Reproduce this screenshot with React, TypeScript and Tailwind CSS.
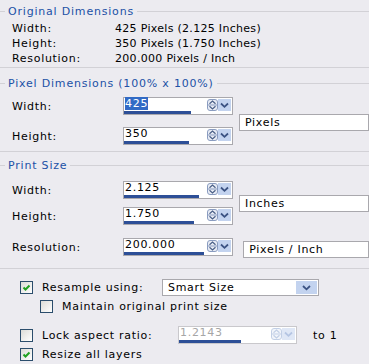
import React from "react";

const LINE = "bg-[#d2d1d6]";

function GroupHeader({ title, h = "h-[20px]" }: { title: string; h?: string }) {
  return (
    <div className={`flex items-center ${h}`}>
      <div className={`w-[5px] h-px ${LINE}`} />
      <span className="px-[3px] text-[#2151a6] whitespace-nowrap tracking-[0.8px]">{title}</span>
      <div className={`flex-1 h-px ${LINE}`} />
    </div>
  );
}

function SpinIcon({ faded }: { faded?: boolean }) {
  const s = faded ? "#c2cfe6" : "#8a9cc0";
  const f = faded ? "#c2cfe6" : "#4a5f86";
  return (
    <svg width="11" height="12" viewBox="0 0 11 12">
      <rect x="0.5" y="0.5" width="10" height="11" rx="2.5" fill={faded ? "#f2f5fb" : "#e8ecf5"} stroke={s} />
      <path d="M2.5 4.8 L5.5 2 L8.5 4.8" fill="none" stroke={f} strokeWidth="1.2" />
      <line x1="1" y1="6" x2="10" y2="6" stroke={s} />
      <path d="M2.5 7.2 L5.5 10 L8.5 7.2" fill="none" stroke={f} strokeWidth="1.2" />
    </svg>
  );
}

function ChevronBtn({ faded, w = 13, h = 12 }: { faded?: boolean; w?: number; h?: number }) {
  return (
    <svg width={w} height={h} viewBox={`0 0 ${w} ${h}`}>
      <rect x="0" y="0" width={w} height={h} fill={faded ? "#dfe7f6" : "#c3d3ef"} />
      <path
        d={`M${w / 2 - 3.5} ${h / 2 - 1.5} L${w / 2} ${h / 2 + 1.8} L${w / 2 + 3.5} ${h / 2 - 1.5}`}
        fill="none"
        stroke={faded ? "#b5c5e3" : "#3b5282"}
        strokeWidth="1.8"
      />
    </svg>
  );
}

function SpinBox({
  value,
  bar,
  selected,
  disabled,
  w = "w-[110px]",
  h = "h-[18px]",
}: {
  value: string;
  bar: number;
  selected?: boolean;
  disabled?: boolean;
  w?: string;
  h?: string;
}) {
  return (
    <div className={`flex flex-col ${w} ${h} bg-white border ${disabled ? "border-[#c9c8cc]" : "border-[#a9a8ad]"}`}>
      <div className="flex flex-1">
        <div className="flex-1 pl-[1px] leading-[12px]">
          <span className={selected ? "bg-[#316ac5] text-white" : disabled ? "text-[#a6a6a6]" : ""}>{value}</span>
        </div>
        <div className="flex items-start pt-[1px] pr-[1px]">
          <SpinIcon faded={disabled} />
          <ChevronBtn faded={disabled} />
        </div>
      </div>
      <div className="h-[3px] flex">
        <div className="h-full bg-[#2d4f97]" style={{ width: bar }} />
      </div>
    </div>
  );
}

function Combo({ label, extra }: { label: string; extra?: string }) {
  return (
    <div className={`w-[130px] h-[17px] bg-white border border-[#a9a8ad] pl-[5px] flex items-center whitespace-nowrap ${extra ?? ""}`}>
      {label}
    </div>
  );
}

function CheckBox({ checked }: { checked?: boolean }) {
  return (
    <div className="w-[13px] h-[13px] border border-[#2b4d6c] bg-gradient-to-br from-[#dcdcd7] to-[#ffffff] flex items-center justify-center shrink-0">
      {checked && (
        <svg width="11" height="11" viewBox="0 0 11 11">
          <path d="M2.5 5.5 L4.5 7.5 L8.5 3.5" fill="none" stroke="#21a121" strokeWidth="2" />
        </svg>
      )}
    </div>
  );
}

function InfoRow({ label, value }: { label: string; value: string }) {
  return (
    <div className="flex items-center h-[15px] pl-[12px]">
      <span className="w-[103px]">{label}</span>
      <span className="whitespace-nowrap tracking-[0.3px]">{value}</span>
    </div>
  );
}

function SpinRow({ label, children, extra }: { label: string; children: React.ReactNode; extra?: string }) {
  return (
    <div className={`flex items-center ${extra ?? ""}`}>
      <span className="pl-[12px] w-[123px]">{label}</span>
      {children}
    </div>
  );
}

export default function App() {
  return (
    <div
      className="w-[369px] h-[364px] bg-[#ecebf0] overflow-hidden text-[11px] leading-[13px] tracking-[0.7px] text-black"
      style={{ fontFamily: '"DejaVu Sans", Verdana, sans-serif' }}
    >
      <div className="pt-[2px]">
        <GroupHeader title="Original Dimensions" h="h-[19px]" />
        <InfoRow label="Width:" value="425 Pixels (2.125 Inches)" />
        <InfoRow label="Height:" value="350 Pixels (1.750 Inches)" />
        <InfoRow label="Resolution:" value="200.000 Pixels / Inch" />
        <div className={`mt-[1px] h-px ${LINE}`} />

        <div className="mt-[5px]">
          <GroupHeader title="Pixel Dimensions (100% x 100%)" />
        </div>
        <div className="flex mt-[4px]">
          <div className="flex flex-col w-[252px]">
            <SpinRow label="Width:">
              <SpinBox value="425" bar={67} selected />
            </SpinRow>
            <SpinRow label="Height:" extra="mt-[12px]">
              <SpinBox value="350" bar={65} />
            </SpinRow>
          </div>
          <div className="flex items-center">
            <Combo label="Pixels" extra="mt-[2px]" />
          </div>
        </div>
        <div className={`mt-[6px] h-px ${LINE}`} />

        <div className="mt-[3px]">
          <GroupHeader title="Print Size" />
        </div>
        <div className="flex mt-[6px]">
          <div className="flex flex-col w-[252px]">
            <SpinRow label="Width:">
              <SpinBox value="2.125" bar={75} />
            </SpinRow>
            <SpinRow label="Height:" extra="mt-[8px]">
              <SpinBox value="1.750" bar={70} />
            </SpinRow>
          </div>
          <div className="flex items-center">
            <Combo label="Inches" extra="mt-[1px]" />
          </div>
        </div>
        <div className="flex mt-[13px] items-start">
          <div className="w-[252px]">
            <SpinRow label="Resolution:">
              <SpinBox value="200.000" bar={80} />
            </SpinRow>
          </div>
          <Combo label="Pixels / Inch" extra="mt-[3px]" />
        </div>
        <div className={`mt-[10px] h-px ${LINE}`} />

        <div className="flex items-center h-[17px] mt-[10px] pl-[20px]">
          <CheckBox checked />
          <span className="pl-[9px] w-[129px] whitespace-nowrap">Resample using:</span>
          <div className="w-[157px] h-[17px] bg-white border border-[#a9a8ad] flex items-center justify-between pl-[5px] pr-[1px]">
            <span>Smart Size</span>
            <ChevronBtn w={21} h={13} />
          </div>
        </div>
        <div className="flex items-center h-[13px] mt-[4px] pl-[40px]">
          <CheckBox />
          <span className="pl-[9px] whitespace-nowrap">Maintain original print size</span>
        </div>
        <div className="flex items-center h-[18px] mt-[13px] pl-[20px]">
          <CheckBox />
          <span className="pl-[9px] w-[145px] whitespace-nowrap">Lock aspect ratio:</span>
          <SpinBox value="1.2143" bar={62} disabled w="w-[119px]" />
          <span className="pl-[16px]">to 1</span>
        </div>
        <div className="flex items-center h-[13px] mt-[4px] pl-[20px]">
          <CheckBox checked />
          <span className="pl-[9px] whitespace-nowrap">Resize all layers</span>
        </div>
      </div>
    </div>
  );
}
